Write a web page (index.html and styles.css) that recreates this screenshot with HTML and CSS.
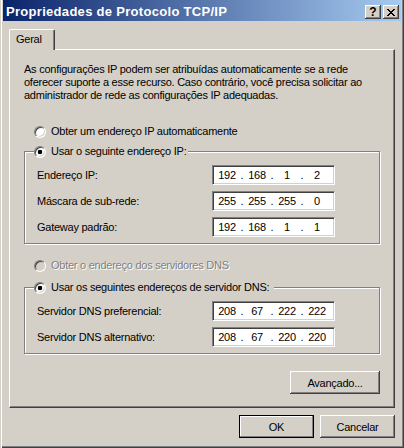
FILE: index.html
```html
<!DOCTYPE html>
<html lang="pt-BR">

<head>
    <meta charset="UTF-8">
    <meta name="viewport" content="width=device-width, initial-scale=1.0">
    <title>Propriedades de Protocolo TCP/IP</title>
    <link rel="stylesheet" href="styles.css">
</head>

<body>
    <div class="window">
        <div class="titlebar">
            <span class="title">Propriedades de Protocolo TCP/IP</span>
            <div class="caption-buttons">
                <button class="cap-btn help">?</button>
                <button class="cap-btn close">
                    <svg width="8" height="7" viewBox="0 0 8 7" shape-rendering="crispEdges">
                        <path fill="#000" d="M0 0h2v1H0z M6 0h2v1H6z M1 1h2v1H1z M5 1h2v1H5z M2 2h4v1H2z M3 3h2v1H3z M2 4h4v1H2z M1 5h2v1H1z M5 5h2v1H5z M0 6h2v1H0z M6 6h2v1H6z"/>
                    </svg>
                </button>
            </div>
        </div>

        <div class="dialog">
            <div class="tabs">
                <div class="tab">Geral</div>
            </div>

            <div class="panel">
                <p class="intro">As configurações IP podem ser atribuídas automaticamente se a rede<br>oferecer suporte a esse recurso. Caso contrário, você precisa solicitar ao<br>administrador de rede as configurações IP adequadas.</p>

                <label class="option top-option"><span class="radio"></span>Obter um endereço IP automaticamente</label>

                <fieldset class="group">
                    <legend><label class="option"><span class="radio on"></span>Usar o seguinte endereço IP:</label></legend>
                    <div class="fields">
                        <span>Endereço IP:</span>
                        <div class="ip-box"><span class="oct">192</span><span class="dot">.</span><span class="oct">168</span><span class="dot">.</span><span class="oct">1</span><span class="dot">.</span><span class="oct">2</span></div>
                        <span>Máscara de sub-rede:</span>
                        <div class="ip-box"><span class="oct">255</span><span class="dot">.</span><span class="oct">255</span><span class="dot">.</span><span class="oct">255</span><span class="dot">.</span><span class="oct">0</span></div>
                        <span>Gateway padrão:</span>
                        <div class="ip-box"><span class="oct">192</span><span class="dot">.</span><span class="oct">168</span><span class="dot">.</span><span class="oct">1</span><span class="dot">.</span><span class="oct">1</span></div>
                    </div>
                </fieldset>

                <label class="option dns-option disabled"><span class="radio"></span>Obter o endereço dos servidores DNS</label>

                <fieldset class="group dns-group">
                    <legend><label class="option"><span class="radio on"></span>Usar os seguintes endereços de servidor DNS:&nbsp;</label></legend>
                    <div class="fields">
                        <span>Servidor DNS preferencial:</span>
                        <div class="ip-box"><span class="oct">208</span><span class="dot">.</span><span class="oct">67</span><span class="dot">.</span><span class="oct">222</span><span class="dot">.</span><span class="oct">222</span></div>
                        <span>Servidor DNS alternativo:</span>
                        <div class="ip-box"><span class="oct">208</span><span class="dot">.</span><span class="oct">67</span><span class="dot">.</span><span class="oct">220</span><span class="dot">.</span><span class="oct">220</span></div>
                    </div>
                </fieldset>

                <div class="panel-actions">
                    <button class="btn advanced">Avançado...</button>
                </div>
            </div>

            <div class="dialog-actions">
                <button class="btn default">OK</button>
                <button class="btn">Cancelar</button>
            </div>
        </div>
    </div>
</body>

</html>
```

FILE: styles.css
```css
body {
    margin: 0;
    background-color: #d4d0c8;
    font-family: "Liberation Sans", Arial, sans-serif;
    font-size: 11px;
    letter-spacing: -0.25px;
    line-height: 13px;
    color: #000;
}

.window {
    width: 404px;
    height: 448px;
    box-sizing: border-box;
    padding: 0 3px 3px 3px;
    display: flex;
    flex-direction: column;
    background-color: #d4d0c8;
    box-shadow: inset 1px 0 0 #d4d0c8, inset 2px 0 0 #fff, inset -1px -1px 0 #404040, inset -2px -2px 0 #808080;
}

/* title bar */
.titlebar {
    height: 21px;
    display: flex;
    align-items: flex-start;
    padding: 0 2px 0 3px;
    background: linear-gradient(to right, #0a246a, #a6caf0);
}

.title {
    margin-top: 5px;
    color: #fff;
    font-size: 13px;
    font-weight: bold;
    letter-spacing: 0.3px;
    white-space: nowrap;
}

.caption-buttons {
    margin-left: auto;
    margin-top: 5px;
    display: flex;
    gap: 2px;
}

.cap-btn {
    width: 16px;
    height: 14px;
    padding: 0;
    border: none;
    display: flex;
    justify-content: center;
    align-items: center;
    background-color: #d4d0c8;
    box-shadow: inset -1px -1px 0 #404040, inset 1px 1px 0 #fff, inset -2px -2px 0 #808080;
    font-family: "Liberation Sans", Arial, sans-serif;
    font-size: 12px;
    font-weight: bold;
    line-height: 12px;
    color: #000;
}

.cap-btn.help {
    padding-bottom: 1px;
}

/* tabs */
.dialog {
    padding: 8px 6px 0 6px;
}

.tabs {
    display: flex;
    margin-bottom: -1px;
}

.tab {
    position: relative;
    z-index: 1;
    width: 46px;
    height: 21px;
    box-sizing: border-box;
    padding: 3px 0 0 6px;
    background-color: #d4d0c8;
    border-left: 1px solid #fff;
    border-top: 1px solid #fff;
    border-right: 1px solid #404040;
    border-top-left-radius: 2px;
    border-top-right-radius: 2px;
    box-shadow: inset -1px 0 0 #808080;
}

.panel {
    height: 359px;
    box-sizing: border-box;
    padding: 13px 14px 0 14px;
    border-top: 1px solid #fff;
    border-left: 1px solid #fff;
    border-right: 1px solid #404040;
    border-bottom: 1px solid #404040;
    box-shadow: inset -1px -1px 0 #808080;
}

.intro {
    margin: 0;
}

/* radio options */
.option {
    display: flex;
    align-items: center;
    gap: 5px;
    white-space: nowrap;
}

.radio {
    width: 12px;
    height: 12px;
    box-sizing: border-box;
    flex-shrink: 0;
    border-radius: 50%;
    border: 1px solid;
    border-color: #808080 #fff #fff #808080;
    background-color: #fff;
    box-shadow: inset 1px 1px 0 #404040, inset -1px -1px 0 #d4d0c8;
}

.radio.on {
    background: radial-gradient(circle, #000 0 2px, #fff 2.6px);
}

.top-option {
    margin: 23px 0 0 10px;
}

.dns-option {
    margin: 15px 0 0 10px;
}

.disabled {
    color: #808080;
    text-shadow: 1px 1px 0 #fff;
}

.disabled .radio {
    background-color: #d4d0c8;
}

/* group boxes */
.group {
    margin: 7px 0 0 0;
    padding: 7px 0 6px 9px;
    border: 1px solid #808080;
    box-shadow: 1px 1px 0 #fff, inset 1px 1px 0 #fff;
}

.dns-group {
    margin-top: 9px;
}

.group legend {
    padding: 0 2px 0 0;
    background-color: #d4d0c8;
}

.fields {
    display: grid;
    grid-template-columns: 175px 123px;
    row-gap: 6px;
    align-items: center;
    margin-left: 3px;
}

.ip-box {
    height: 20px;
    box-sizing: border-box;
    display: flex;
    align-items: center;
    padding-left: 1px;
    background-color: #fff;
    border: 1px solid;
    border-color: #808080 #fff #fff #808080;
    box-shadow: inset 1px 1px 0 #404040, inset -1px -1px 0 #d4d0c8;
}

.oct {
    width: 26px;
    text-align: center;
}

.dot {
    width: 4px;
    text-align: center;
}

/* buttons */
.btn {
    width: 75px;
    height: 23px;
    box-sizing: border-box;
    padding: 0;
    border: none;
    background-color: #d4d0c8;
    box-shadow: inset -1px -1px 0 #404040, inset 1px 1px 0 #fff, inset -2px -2px 0 #808080;
    font-family: inherit;
    font-size: 11px;
    letter-spacing: -0.25px;
    color: #000;
}

.btn.default {
    border: 1px solid #000;
    box-shadow: inset -1px -1px 0 #808080, inset 1px 1px 0 #fff;
}

.btn.advanced {
    width: 90px;
}

.panel-actions {
    display: flex;
    justify-content: flex-end;
    margin-top: 17px;
}

.dialog-actions {
    display: flex;
    justify-content: flex-end;
    gap: 6px;
    margin-top: 7px;
}
```
